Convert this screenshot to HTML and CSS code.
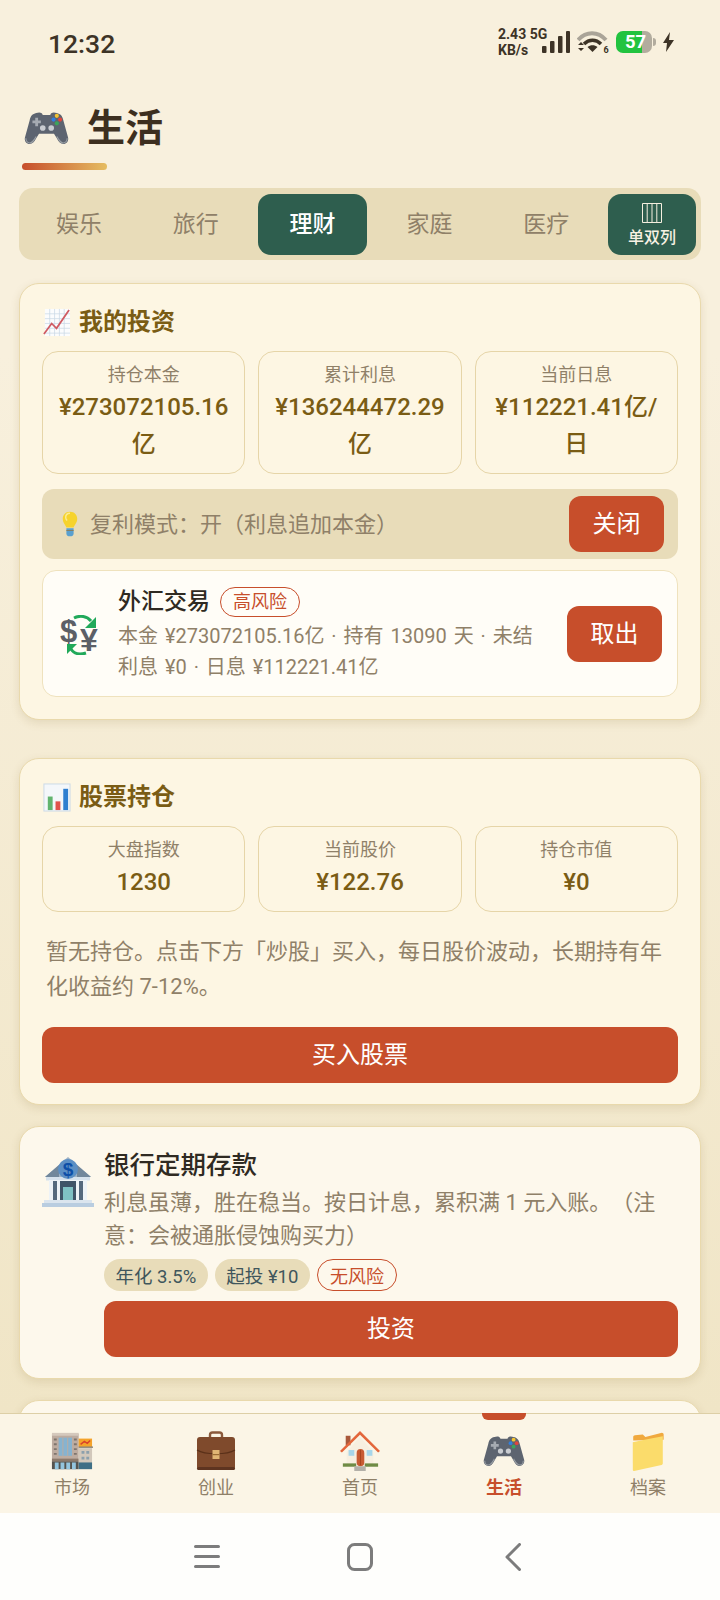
FILE: index.html
```html
<!DOCTYPE html>
<html lang="zh-CN">
<head>
<meta charset="utf-8">
<title>生活</title>
<link rel="stylesheet" href="styles.css">
</head>
<body>
<svg class="defs" width="0" height="0" aria-hidden="true">
  <defs>
    <symbol id="i-pad" viewBox="0 0 48 36">
      <path d="M13 2c3-1 6-1 7 2h8c1-3 4-3 7-2 4 1 6 3 7 8l5 18c1 4-2 7-5 7-3 0-5-2-7-6l-3-5H16l-3 5c-2 4-4 6-7 6-3 0-6-3-5-7l5-18c1-5 3-7 7-8z" fill="#5d6470"/>
      <path d="M2 29c0 3 2 5 4 5 3 0 4-2 7-7" fill="none" stroke="#9aa0a6" stroke-width="1.2"/>
      <path d="M46 29c0 3-2 5-4 5-3 0-4-2-7-7" fill="none" stroke="#9aa0a6" stroke-width="1.2"/>
      <path d="M9 10h3V7h3v3h3v3h-3v3h-3v-3H9z" fill="#a6abb2"/>
      <circle cx="20" cy="18" r="3" fill="#c9ccd1"/><circle cx="29" cy="18" r="3" fill="#c9ccd1"/>
      <circle cx="35" cy="5" r="2.2" fill="#f4c430"/><circle cx="38.500" cy="9" r="2.200" fill="#e0463c"/><circle cx="31.500" cy="9" r="2.200" fill="#2f7fe0"/><circle cx="35" cy="13" r="2.200" fill="#3ba55c"/>
    </symbol>
    <symbol id="i-chart" viewBox="0 0 30 30">
      <rect x="3" y="1" width="26" height="28" fill="#fbfcfd"/>
      <path d="M8 1v28M13 1v28M18 1v28M23 1v28M3 6h26M3 11h26M3 16h26M3 21h26M3 26h26" stroke="#cbd9e6" stroke-width=".8"/>
      <path d="M2 27l8-11 5 5L28 2" fill="none" stroke="#cf5a62" stroke-width="1.8"/>
    </symbol>
    <symbol id="i-bars" viewBox="0 0 30 30">
      <rect x="2" y="1" width="27" height="28" fill="#f4f7fa" stroke="#cbd9e6"/>
      <rect x="6" y="14" width="5" height="14" fill="#62b46e"/>
      <rect x="14" y="19" width="5" height="9" fill="#e0534a"/>
      <rect x="22" y="6" width="5" height="22" fill="#2f7fd0"/>
    </symbol>
    <symbol id="i-bulb" viewBox="0 0 24 36">
      <path d="M12 1C5.500 1 2 5.800 2 11c0 5 3.500 7.500 5 12h10c1.500-4.500 5-7 5-12 0-5.200-3.500-10-10-10z" fill="#f6d32d"/>
      <path d="M12 3c-4 0-6 3-6 6 0 2 1 3 2 4" fill="none" stroke="#fcec91" stroke-width="2"/>
      <path d="M7 24h10v7c0 3-2 4-5 4s-5-1-5-4z" fill="#5aa0cf"/>
      <path d="M7 27h10" stroke="#8a7a55" stroke-width="1.200"/>
    </symbol>
    <symbol id="i-fx" viewBox="0 0 40 40">
      <text class="fx-text" x="0" y="27" font-size="31" fill="#5c5f66">$</text>
      <text class="fx-text" x="20" y="36" font-size="32" fill="#5c5f66">¥</text>
      <path d="M14 3c6-3 13-2 17 3" fill="none" stroke="#21a95a" stroke-width="3"/>
      <path d="M36 2v11H25z" fill="#21a95a"/>
      <path d="M26 38c-6 2-12 1-15-4" fill="none" stroke="#21a95a" stroke-width="3"/>
      <path d="M7 39V29h10z" fill="#21a95a"/>
    </symbol>
    <symbol id="i-bank" viewBox="0 0 52 52">
      <path d="M26 1L3 21h46z" fill="#9fb2c4"/>
      <path d="M3 21L17 9v12zM49 21L35 9v12z" fill="#71879b"/>
      <rect x="4" y="21" width="44" height="3.500" fill="#d5e1ec"/>
      <rect x="7" y="24" width="38" height="20" fill="#eef3f7"/>
      <rect x="11" y="25" width="4" height="19" fill="#55697d"/>
      <rect x="37" y="25" width="4" height="19" fill="#55697d"/>
      <rect x="18" y="25" width="16" height="19" fill="#3f5468"/>
      <rect x="21" y="31" width="10" height="13" fill="#7fc1c4"/>
      <rect x="2" y="44" width="48" height="3" fill="#dbe5ee"/>
      <rect x="0" y="47" width="52" height="4" fill="#b9cde0"/>
      <circle cx="26" cy="13" r="10" fill="#5c8fc4"/>
      <text class="fx-text" x="26" y="20" font-size="19" text-anchor="middle" fill="#0d4fa8">$</text>
    </symbol>
    <symbol id="i-store" viewBox="0 0 44 40">
      <rect x="1" y="2" width="28" height="37" fill="#bdaca0"/>
      <rect x="1" y="1" width="28" height="3" fill="#d5c9bd"/>
      <rect x="8" y="6" width="14" height="19" fill="#86b3d0"/>
      <path d="M12.500 6v19M17.500 6v19" stroke="#bdaca0"/>
      <path d="M3 8h3M3 13h3M3 18h3M3 23h3M24 8h3M24 13h3M24 18h3M24 23h3" stroke="#7f756d" stroke-width="2"/>
      <rect x="1" y="28" width="28" height="3" fill="#8c7a6c"/>
      <rect x="1" y="31" width="28" height="8" fill="#56544f"/>
      <path d="M6 32v7M12 32v7M18 32v7M24 32v7" stroke="#94c5de" stroke-width="4"/>
      <rect x="29" y="7" width="14" height="9" fill="#f4a32b"/>
      <path d="M31 13l4-3 3 2 3-3" fill="none" stroke="#d9412b" stroke-width="1.500"/>
      <rect x="29" y="17" width="14" height="22" fill="#d2c8bb"/>
      <path d="M29 16h15" stroke="#8a8378" stroke-width="1.500"/>
      <path d="M32 20h3v3h-3zM37 20h3v3h-3zM32 26h3v3h-3zM37 26h3v3h-3z" fill="#8ca0ad"/>
      <rect x="29" y="32" width="14" height="7" fill="#3f6f86"/>
    </symbol>
    <symbol id="i-case" viewBox="0 0 40 40">
      <path d="M14 7V4c0-1.500 1-2.500 2.500-2.500h7C25 1.500 26 2.500 26 4v3" fill="none" stroke="#8b5a3c" stroke-width="2.400"/>
      <rect x="1" y="6" width="38" height="33" rx="3" fill="#7f4a2c"/>
      <path d="M1 19c8 5 30 5 38 0" fill="none" stroke="#5a3019" stroke-width="1.200"/>
      <rect x="1" y="36" width="38" height="3" rx="1.500" fill="#5e3420"/>
      <rect x="16.500" y="19" width="7" height="9" fill="#e0b574"/>
      <rect x="16.500" y="23" width="7" height="1.200" fill="#9a6b34"/>
    </symbol>
    <symbol id="i-home" viewBox="0 0 42 42">
      <rect x="6" y="5" width="5" height="10" fill="#a9583a"/>
      <path d="M21 6L7 22v14h28V22z" fill="#f7efe0"/>
      <path d="M0 21L21 0l21 21-2 1.500L21 4 2 22.500z" fill="#e3673c"/>
      <rect x="17.500" y="19" width="8" height="18" rx="4" fill="#c85b33"/>
      <path d="M21.500 20v16" stroke="#a7431f"/>
      <rect x="9" y="20" width="6" height="6" fill="#a7d6ea"/>
      <rect x="28" y="20" width="6" height="6" fill="#a7d6ea"/>
      <rect x="3" y="34" width="14" height="3.500" fill="#6f8b45"/>
      <rect x="26" y="34" width="14" height="3.500" fill="#6f8b45"/>
      <rect x="15" y="37" width="12" height="5" fill="#b3b0a8"/>
    </symbol>
    <symbol id="i-folder" viewBox="0 0 36 46">
      <path d="M1 11l0-4c0-1 1-2 2-2l9-1 3 3L34 2c1 0 2 1 2 2v6z" fill="#f0a93e"/>
      <path d="M35 6v31c0 1-.500 1.500-1.500 2L2 46c-1 .200-1.500-.500-1.500-1.500V13L14 10z" fill="#fbdc6b"/>
    </symbol>
  </defs>
</svg>

<div class="app">
  <main class="screen">
    <header class="status">
      <span class="clock">12:32</span>
      <div class="status-right">
        <span class="net"><span>2.43 5G</span><span>KB/s</span></span>
        <svg class="sig" viewBox="0 0 28 22"><rect x="0" y="15" width="4.500" height="7" rx="1"/><rect x="8" y="10" width="4.500" height="12" rx="1"/><rect x="16" y="5" width="4.500" height="17" rx="1"/><rect x="24" y="0" width="4" height="22" rx="1"/></svg>
        <svg class="wifi" viewBox="0 0 32 22"><path d="M1 9c8-9 20-9 28 0" fill="none" stroke="#aaa498" stroke-width="4"/><path d="M7 13c5-5 12-5 17 0" fill="none" stroke="#3d3326" stroke-width="3.500"/><path d="M15.500 21l-5-5c3-2.500 7-2.500 10 0z" fill="#3d3326"/><path d="M1 14l3-3 3 3zM1 17l3 3 3-3z" fill="#3d3326"/><text class="wifi-six" x="26.500" y="21.500">6</text></svg>
        <span class="battery"><span class="battery-num">57</span></span>
        <svg class="bolt" viewBox="0 0 11 20"><path d="M7 0L0 11h4l-1 9 8-12H6z" fill="#3d3326"/></svg>
      </div>
    </header>

    <div class="page">
      <div class="title-row">
        <svg class="title-icon"><use href="#i-pad"/></svg>
        <h1 class="title">生活</h1>
      </div>
      <div class="title-bar"></div>

      <nav class="tabs">
        <span class="tab">娱乐</span>
        <span class="tab">旅行</span>
        <span class="tab tab-active">理财</span>
        <span class="tab">家庭</span>
        <span class="tab">医疗</span>
        <span class="toggle">
          <svg class="toggle-icon" viewBox="0 0 20 20"><path d="M.5.5h19v19H.5zM5.200.5v19M10 .5v19M14.800.5v19" fill="none" stroke="#f5efdf" stroke-width="1"/></svg>
          <span>单双列</span>
        </span>
      </nav>

      <section class="card card-first">
        <h2 class="card-head"><svg class="head-icon"><use href="#i-chart"/></svg>我的投资</h2>
        <div class="stats">
          <div class="stat"><div class="stat-label">持仓本金</div><div class="stat-value">¥273072105.16亿</div></div>
          <div class="stat"><div class="stat-label">累计利息</div><div class="stat-value">¥136244472.29亿</div></div>
          <div class="stat"><div class="stat-label">当前日息</div><div class="stat-value">¥112221.41亿/日</div></div>
        </div>
        <div class="compound">
          <svg class="bulb"><use href="#i-bulb"/></svg>
          <span class="compound-text">复利模式：开（利息追加本金）</span>
          <button class="btn btn-small">关闭</button>
        </div>
        <div class="holding">
          <svg class="fx"><use href="#i-fx"/></svg>
          <div class="holding-body">
            <div class="holding-title"><span>外汇交易</span><span class="risk">高风险</span></div>
            <p class="holding-desc">本金 ¥273072105.16亿 · 持有 13090 天 · 未结利息 ¥0 · 日息 ¥112221.41亿</p>
          </div>
          <button class="btn btn-small">取出</button>
        </div>
      </section>

      <section class="card card-second">
        <h2 class="card-head"><svg class="head-icon"><use href="#i-bars"/></svg>股票持仓</h2>
        <div class="stats">
          <div class="stat"><div class="stat-label">大盘指数</div><div class="stat-value">1230</div></div>
          <div class="stat"><div class="stat-label">当前股价</div><div class="stat-value">¥122.76</div></div>
          <div class="stat"><div class="stat-label">持仓市值</div><div class="stat-value">¥0</div></div>
        </div>
        <p class="note">暂无持仓。点击下方「炒股」买入，每日股价波动，长期持有年化收益约 7-12%。</p>
        <button class="btn btn-wide">买入股票</button>
      </section>

      <section class="card card-product">
        <svg class="bank"><use href="#i-bank"/></svg>
        <div class="product-body">
          <h3 class="product-title">银行定期存款</h3>
          <p class="product-desc">利息虽薄，胜在稳当。按日计息，累积满 1 元入账。（注意：会被通胀侵蚀购买力）</p>
          <div class="tags">
            <span class="tag">年化 3.5%</span>
            <span class="tag">起投 ¥10</span>
            <span class="risk risk-tag">无风险</span>
          </div>
          <button class="btn btn-wide">投资</button>
        </div>
      </section>

      <section class="card card-next"></section>
    </div>
  </main>

  <nav class="bottom">
    <div class="bottom-item"><svg class="bottom-icon"><use href="#i-store"/></svg><span>市场</span></div>
    <div class="bottom-item"><svg class="bottom-icon"><use href="#i-case"/></svg><span>创业</span></div>
    <div class="bottom-item"><svg class="bottom-icon"><use href="#i-home"/></svg><span>首页</span></div>
    <div class="bottom-item bottom-active"><svg class="bottom-icon"><use href="#i-pad"/></svg><span>生活</span></div>
    <div class="bottom-item"><svg class="bottom-icon"><use href="#i-folder"/></svg><span>档案</span></div>
  </nav>

  <footer class="sysnav">
    <svg class="sys-menu" viewBox="0 0 26 25"><path d="M1.500 2.500h23M1.500 12.500h23M1.500 22.500h23" stroke="#7c7c7c" stroke-width="3" stroke-linecap="round"/></svg>
    <svg class="sys-home" viewBox="0 0 26 28"><rect x="1.500" y="1.500" width="23" height="25" rx="6" fill="none" stroke="#7c7c7c" stroke-width="3"/></svg>
    <svg class="sys-back" viewBox="0 0 16 28"><path d="M14.500 1.500L2 14l12.500 12.500" fill="none" stroke="#7c7c7c" stroke-width="3" stroke-linecap="round" stroke-linejoin="round"/></svg>
  </footer>
</div>
</body>
</html>
```

FILE: styles.css
```css
* { box-sizing: border-box; }
html, body { margin: 0; padding: 0; }
body {
  width: 720px;
  height: 1600px;
  overflow: hidden;
  font-family: "Roboto", "Noto Sans CJK SC", sans-serif;
  text-spacing-trim: space-all;
  color: #3d2f1f;
  background: #fefefc;
}
.defs { display: block; width: 0; height: 0; }
.fx-text { font-family: "Liberation Sans", sans-serif; font-weight: 700; }

.app { height: 1600px; display: flex; flex-direction: column; }
.screen {
  flex: 1;
  min-height: 0;
  overflow: hidden;
  background: linear-gradient(180deg, #f8f0dd 0%, #f8f0dd 25%, #f0e5c6 100%);
}

/* status bar */
.status {
  height: 85px;
  padding: 0 46px 2px 48px;
  display: flex;
  align-items: center;
  justify-content: space-between;
  color: #3d3326;
}
.clock { margin-top: 4px; font-size: 26.500px; font-weight: 500; }
.status-right { display: flex; align-items: center; }
.net {
  display: flex;
  flex-direction: column;
  font-size: 14px;
  font-weight: 700;
  line-height: 16px;
  width: 44px;
  white-space: nowrap;
}
.sig { width: 28px; height: 22px; fill: #3d3326; }
.wifi { width: 32px; height: 22px; margin-left: 7px; }
.wifi-six { font-size: 9px; font-weight: 700; fill: #3d3326; }
.battery {
  position: relative;
  width: 36px;
  height: 22px;
  margin-left: 7px;
  border-radius: 7px;
  background: linear-gradient(90deg, #22c33f 26px, #b2ac9e 26px);
}
.battery::after {
  content: "";
  position: absolute;
  right: -4px;
  top: 7px;
  width: 3px;
  height: 8px;
  border-radius: 0 3px 3px 0;
  background: #b2ac9e;
}
.battery-num {
  position: absolute;
  left: 9px;
  top: 0;
  font-size: 18.500px;
  font-weight: 700;
  line-height: 22px;
  color: #fff;
}
.bolt { width: 11px; height: 20px; margin-left: 11px; }

/* title */
.page { padding: 15px 19px 0; }
.title-row { display: flex; align-items: center; height: 56px; margin-left: 5px; }
.title-icon { width: 45px; height: 34px; }
.title { margin: 0 0 0 18px; font-size: 38px; font-weight: 700; line-height: 56px; color: #3d2f1f; }
.title-bar {
  width: 85px;
  height: 7px;
  margin: 7px 0 18px 3px;
  border-radius: 4px;
  background: linear-gradient(90deg, #c74e2b, #e5bd62);
}

/* tabs */
.tabs {
  height: 72px;
  padding: 6px 5px 5px 5px;
  display: flex;
  gap: 7px;
  background: #e8dcb9;
  border-radius: 14px;
}
.tab {
  width: 110px;
  padding-bottom: 5px;
  display: flex;
  align-items: center;
  justify-content: center;
  border-radius: 13px;
  font-size: 23px;
  color: #8f8068;
}
.tab-active { background: #2e5e4e; color: #fff; font-weight: 500; }
.toggle {
  width: 88px;
  padding-top: 2px;
  display: flex;
  flex-direction: column;
  align-items: center;
  justify-content: center;
  gap: 5px;
  border-radius: 13px;
  background: #2e5e4e;
  color: #f7f1e3;
  font-size: 16px;
  line-height: 20px;
  font-weight: 500;
}
.toggle-icon { width: 20px; height: 20px; }

/* cards */
.card {
  background: #fdf6e3;
  border: 1px solid #e9d9ac;
  border-radius: 20px;
  box-shadow: 0 3px 10px rgba(120, 90, 30, .14);
}
.card-first { margin-top: 23px; height: 437px; padding: 23px 22px 0; }
.card-second { margin-top: 38px; height: 347px; padding: 23px 22px 0; }
.card-product {
  margin-top: 21px;
  height: 253px;
  padding: 29px 22px 0;
  display: flex;
  background: #fdf8ec;
}
.card-next { margin-top: 21px; height: 80px; background: #fdf8ec; }

.card-head {
  margin: 0 0 14px;
  height: 30px;
  display: flex;
  align-items: center;
  gap: 8px;
  font-size: 24px;
  font-weight: 700;
  line-height: 28px;
  color: #7a5c14;
}
.head-icon { width: 29px; height: 29px; flex: none; }

.stats { display: grid; grid-template-columns: repeat(3, 1fr); gap: 13px; }
.stat {
  padding: 9px 8px 10px;
  border: 1px solid #e6d5a8;
  border-radius: 16px;
  text-align: center;
  background: #fdf6e3;
}
.stat-label { font-size: 18px; line-height: 28px; color: #8f8068; }
.stat-value {
  font-size: 24px;
  font-weight: 500;
  line-height: 37px;
  color: #7a5c14;
  word-break: break-all;
}

.compound {
  margin-top: 15px;
  height: 70px;
  padding: 0 14px 0 18px;
  display: flex;
  align-items: center;
  background: #e8dcb9;
  border-radius: 12px;
}
.bulb { width: 20px; height: 26px; flex: none; }
.compound-text { flex: 1; margin: 0 0 5px 10px; font-size: 22px; color: #8f8068; }

.btn {
  padding: 0 0 5px;
  border: 0;
  color: #fff;
  background: #c74e2b;
  font-family: inherit;
  cursor: pointer;
}
.btn-small {
  width: 95px;
  height: 56px;
  flex: none;
  border-radius: 12px;
  font-size: 24px;
}
.btn-wide {
  display: block;
  width: 100%;
  height: 56px;
  border-radius: 12px;
  font-size: 24px;
}

.holding {
  margin-top: 11px;
  height: 127px;
  padding: 0 15px 0 17px;
  display: flex;
  align-items: center;
  background: #fffdf7;
  border: 1px solid #efe2bd;
  border-radius: 14px;
}
.fx { width: 40px; height: 40px; flex: none; margin-top: 3px; }
.holding-body { flex: 1; margin: 2px 25px 0 18px; min-width: 0; }
.holding-title { display: flex; align-items: center; font-size: 23px; font-weight: 500; line-height: 32px; color: #2f2a22; }
.risk {
  margin-left: 10px;
  height: 30px;
  padding: 0 12px;
  display: inline-flex;
  align-items: center;
  border: 1px solid #c74e2b;
  border-radius: 15px;
  font-size: 18px;
  font-weight: 400;
  color: #c74e2b;
}
.holding-desc { margin: 3px 0 0; font-size: 20px; word-spacing: 2px; line-height: 31px; color: #8f8068; }

.note { margin: 22px 4px 23px; font-size: 22px; line-height: 35px; color: #8f8068; }

.bank { width: 52px; height: 52px; flex: none; }
.product-body { flex: 1; min-width: 0; margin-left: 10px; margin-top: -8px; }
.product-title { margin: 0; font-size: 25.500px; font-weight: 500; line-height: 34px; color: #2f2a22; }
.product-desc { margin: 4px 0 0; font-size: 22px; line-height: 33px; color: #8f8068; }
.tags { margin-top: 7px; display: flex; gap: 7px; }
.tag {
  height: 32px;
  padding: 0 11.500px;
  display: inline-flex;
  align-items: center;
  border-radius: 16px;
  background: #e8dcb9;
  font-size: 18.500px;
  color: #40565c;
}
.risk-tag { margin-left: 0; height: 32px; border-radius: 16px; }
.product-body .btn-wide { margin-top: 10px; }

/* bottom nav */
.bottom {
  height: 100px;
  flex: none;
  display: grid;
  grid-template-columns: repeat(5, 1fr);
  background: #fbf5e6;
  border-top: 1px solid #ddcfa6;
}
.bottom-item {
  position: relative;
  padding-top: 17px;
  display: flex;
  flex-direction: column;
  align-items: center;
  font-size: 18px;
  line-height: 24px;
  color: #8f8068;
}
.bottom-icon { width: 42px; height: 40px; margin-bottom: 5px; }
.bottom-active { color: #c74e2b; font-weight: 700; }
.bottom-active::before {
  content: "";
  position: absolute;
  top: -1px;
  left: 50%;
  width: 44px;
  height: 7px;
  margin-left: -22px;
  background: #c74e2b;
  border-radius: 0 0 6px 6px;
}

/* system nav */
.sysnav {
  height: 87px;
  flex: none;
  display: flex;
  align-items: center;
  justify-content: center;
  padding-right: 5px;
  background: #fefefc;
}
.sys-menu { width: 26px; height: 25px; }
.sys-home { width: 26px; height: 28px; margin-left: 127px; }
.sys-back { width: 16px; height: 28px; margin-left: 132px; }
```
